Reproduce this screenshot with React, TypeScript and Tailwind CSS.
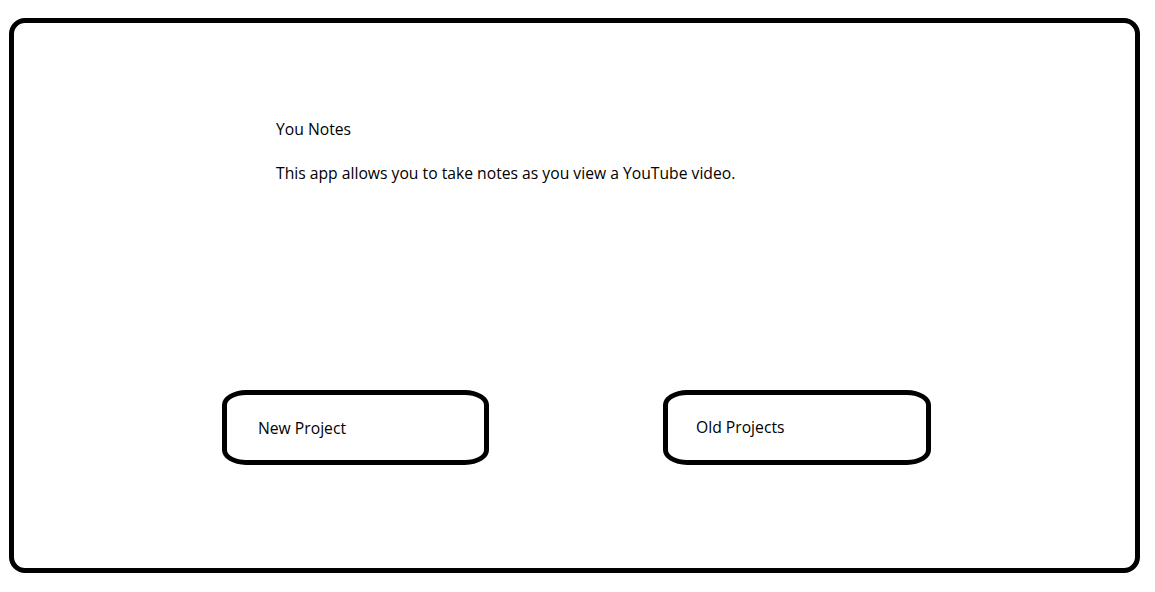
export default function App() {
  return (
    <div className="min-h-screen bg-white pl-[9px] pt-[18px] font-['Open_Sans',sans-serif] text-black">
      <div className="h-[555px] w-[1131px] rounded-[16px] border-[5px] border-black">
        <div className="pl-[262px] pt-[96px] text-[15.7px] leading-[20px]">
          <p>You Notes</p>
          <p className="mt-[24px]">This app allows you to take notes as you view a YouTube video.</p>
        </div>
        <div className="mt-[207px] flex pl-[208px]">
          <button className="flex h-[75px] w-[267px] items-center rounded-[24px/15px] border-[5px] border-black pl-[31px] pt-[2px] text-[15.7px]">
            New Project
          </button>
          <button className="ml-[174px] flex h-[75px] w-[268px] items-center rounded-[24px/15px] border-[5px] border-black pl-[28px] text-[15.7px]">
            Old Projects
          </button>
        </div>
      </div>
    </div>
  )
}
